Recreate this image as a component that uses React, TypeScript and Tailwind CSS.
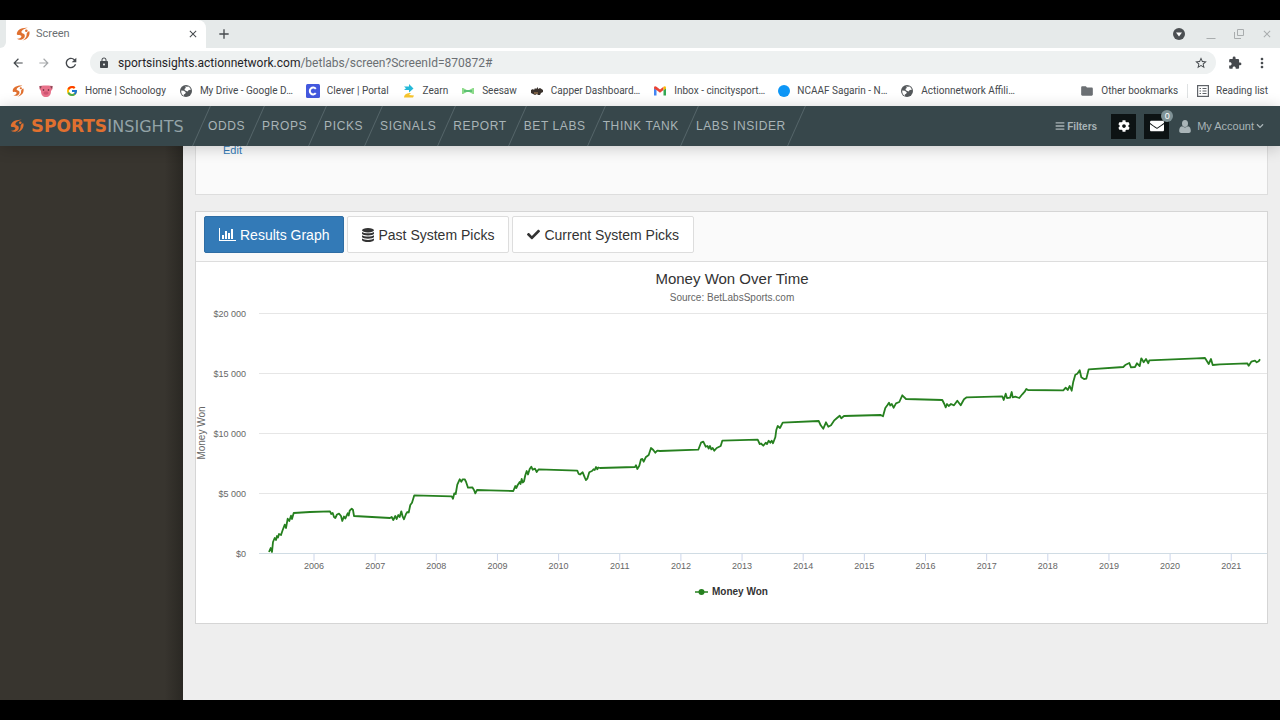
import type { ReactNode } from 'react';
import { FaCog, FaEnvelope, FaBars, FaCheck, FaChevronDown } from 'react-icons/fa';
import { FcGoogle } from 'react-icons/fc';
import {
  MdAdd,
  MdArrowBack,
  MdArrowForward,
  MdClose,
  MdExtension,
  MdFolder,
  MdLock,
  MdMoreVert,
  MdRefresh,
  MdStarBorder,
} from 'react-icons/md';

const navItems = ['ODDS', 'PROPS', 'PICKS', 'SIGNALS', 'REPORT', 'BET LABS', 'THINK TANK', 'LABS INSIDER'];

const years = [2006, 2007, 2008, 2009, 2010, 2011, 2012, 2013, 2014, 2015, 2016, 2017, 2018, 2019, 2020, 2021];

const moneyTicks = ['$0', '$5 000', '$10 000', '$15 000', '$20 000'];

// one line per season, followed by the flat off-season stretch
const moneyWon = [
  '269,552 270.7,548 272,552 273,542 274.7,538 276,540 277,536 278,537.5 279,534 281,535 282.7,530 284.7,524.7 286,528 287.7,518.7 289.3,521 291,515.7 292,519 293.7,513',
  '310,512 330,511.3 331.3,514 332.7,513 334,517 335.3,518 337,514.5 339,513.7 341,516 342.3,521 344,516.5 345.3,518.5 347.7,513.3 348.7,515.5 349.7,510.7 351.7,508.7 353,510 354,516',
  '390,518 391.7,517 393.3,520 395.3,516 396.7,519 398.3,515 399.7,517 401.3,511.3 402.7,516.7 404,519.3 406,514 407.3,512 408.7,512.5 410.3,505 412,502.7 414.3,495.3',
  '451.7,496.3 453,498.7 454.3,493.3 455.7,494 457.3,484.7 459.7,479.3 461.3,481.7 462.7,479.3 464.7,479.3 466,481.7 468,487.7 472.3,487.3 474,490 475.3,493.3 477,490',
  '490,490.3 513.3,491 515.3,486 516.3,488 517.7,485 519.7,482 520.5,484 521.7,479 522.7,482.5 524,481.3 525.3,475.3 526.7,471 528,474.5 529.7,469 531.3,466.7 532.7,469.7 535,468.7 536.7,472 538.7,469.3',
  '577.3,470.7 578.7,474 580,474.5 582.7,472.3 584.7,477.3 586,480 587.3,478.7 589.3,472.3 592,471 593.5,469.3 594.7,470 596,467 597.3,469.3 598.3,467.5 600,468',
  '635,467 636,465.3 637.3,469 639.3,465.7 641,459.3 642.3,459 643.7,461.7 645.7,457.3 648.7,455 651,448 653.3,450 655.3,452.7 657.3,450.7 660,451',
  '698.3,449.7 701,442.7 703.3,441.7 705.7,446.7 707.5,446 708.7,448.5 710,446 711.3,449.3 712.7,448 714.3,450.7 716.7,448 720.7,446 722.3,440.7',
  '757.7,439.7 759.7,444 761,443.5 763.3,445.7 765.7,442.7 767,444 768.7,440.7 770.3,442.7 771.7,440.7 773,443.3 775.3,437.3 776.3,430 777.7,426 780,428 782.7,422.7',
  '818.7,421 820.7,425.3 823.3,428.7 826,422.3 828.3,426.7 831,425.3 834,420.7 837,418 839.7,415.7 841.3,418.3 844,416',
  '880.7,415 883,416.3 885.3,408 887.3,405.3 889,402.7 890.3,405.5 891.7,404 893.7,407.7 896,403.3 899.3,402 902.3,395.3 906,399',
  '942.3,400 944.3,404 945.7,407.3 947,404 948.7,406 951,404 954,405.3 957.3,400.7 960.7,405.3 964,399.3 966.7,397.3',
  '1002.3,396.3 1003.7,400 1005.7,393.7 1007,398 1010,397.7 1011.7,392 1012.7,397.3 1015.3,396.7 1019.3,398 1022.3,394.3 1024.7,391.7 1026.3,389',
  '1028,390 1063.3,390.3 1065.7,387.7 1067.7,390 1069.7,386 1071.7,390.7 1073.3,381.7 1075.3,374.7 1077.3,373.7 1079.7,370.3 1081.3,377.3 1084,379 1086.3,378.7 1088.7,369.3',
  '1123.3,367 1125.7,364.7 1129.3,363 1131,367.3 1135,367 1137,363.3 1139.7,366 1141.3,358.3 1143.7,362.3 1146,359 1148.3,363.3 1149.3,360.3',
  '1196.7,358.3 1205,358 1208.7,364 1211,359 1212.7,365 1220,364.3 1247.3,363.3 1248.7,365.7 1251.3,361.7 1255,360.7 1256.7,362.3 1258.7,361.3 1260,359.3',
].join(' ');

function BallMark({ className }: { className: string }) {
  return (
    <svg viewBox="0 0 14 14" className={className} aria-hidden="true">
      <path d="M12 .8C6 0 .6 3 .8 7.200 1.800 8.800 5.200 7.600 5.400 9 5.500 10.800 3.500 12 .8 11.800 4.800 14 9 11.800 8.800 8.400 8.600 6 5.200 6.600 5.400 5 5.600 3.200 8.500 1.600 12 .8Z" fill="#e0702f" />
      <path d="M13.300 4.200C14.500 8.500 11.500 12.500 6.500 13.600 9.500 11.800 10.800 9.500 10.600 7 10.800 5.500 12 4.400 13.300 4.200Z" fill="#e0702f" />
      <circle cx="10.300" cy="3.800" r="1.300" fill="#e0702f" />
    </svg>
  );
}

function GlobeIcon() {
  return (
    <svg viewBox="0 0 14 14" className="size-3.5" aria-hidden="true">
      <circle cx="7" cy="7" r="6" fill="#54585b" />
      <path d="M2.200 6.500l2.600.3 2 1.400-.6 1.500-1.400.8v1.500C3 10.800 2 9 2.200 6.500ZM6 2.500l2 .2L9.500 2.600c1.300.9 2 2 2.300 3.200l-2 .3-1.300 1.400-1.700-.7L5.500 6l.3-1.500L7 4Z" fill="#fff" />
    </svg>
  );
}

function PigIcon() {
  return (
    <svg viewBox="0 0 14 14" className="size-3.5" aria-hidden="true">
      <path d="M.5 2l4-.5h5l4 .5v3L12 7c0 4-2 6-5 6S2 11 2 7L.5 5Z" fill="#e8718a" />
      <path d="M.5 2l2.500.5L1 5ZM13.500 2l-2.500.5 2 2.500Z" fill="#7d4652" />
      <ellipse cx="7" cy="9" rx="2.600" ry="1.800" fill="#cf5572" />
      <circle cx="4.500" cy="6" r=".8" fill="#4d2430" />
      <circle cx="9.500" cy="6" r=".8" fill="#4d2430" />
    </svg>
  );
}

function CleverIcon() {
  return (
    <svg viewBox="0 0 14 14" className="size-3.5" aria-hidden="true">
      <rect width="14" height="14" rx="1.500" fill="#4358de" />
      <path d="M9.800 4.800A3.400 3.400 0 1 0 9.800 9.200" fill="none" stroke="#fff" strokeWidth="2" />
    </svg>
  );
}

function ZearnIcon() {
  return (
    <svg viewBox="0 0 14 14" className="size-3.5" aria-hidden="true">
      <path d="M2 2.500h5V0l4.500 4.500L7 8.500V6H2l2-1.700Z" fill="#25b9d8" />
      <path d="M2 13.500c.5-3.500 3-4.500 7-4.500l-2 2 5 .5-1 2Z" fill="#f7c52d" />
    </svg>
  );
}

function SeesawIcon() {
  return (
    <svg viewBox="0 0 14 14" className="size-3.5" aria-hidden="true">
      <path d="M1 4c3 0 3 2 6 2s3-2 6-2v6c-3 0-3-2-6-2s-3 2-6 2Z" fill="#8edb8b" />
      <path d="M3 7h8" stroke="#4cb96c" strokeWidth="1.500" />
    </svg>
  );
}

function CapperIcon() {
  return (
    <svg viewBox="0 0 14 14" className="size-3.5" aria-hidden="true">
      <path d="M1 6l2-1 1 1 1-2 1 1 2-2v2l2-1 3 2v2l-2 1-1 2H8l-1-1-2 1-2-1-2-1Z" fill="#3a322d" />
      <path d="M4 9h4" stroke="#b98a5a" />
    </svg>
  );
}

function GmailIcon() {
  return (
    <svg viewBox="0 0 14 14" className="size-3.5" aria-hidden="true">
      <path d="M1 4v7.500h2.500V6Z" fill="#4285f4" />
      <path d="M13 4v7.500h-2.500V6Z" fill="#34a853" />
      <path d="M1 4c0-2 1.500-2 2.500-1.200L7 5.500l3.500-2.700V6L7 8.800 3.500 6v.2L1 4.500Z" fill="#ea4335" />
      <path d="M10.500 2.800C11.500 2 13 2 13 4v.5L10.500 6.200Z" fill="#fbbc04" />
    </svg>
  );
}

function DotIcon() {
  return <span className="block size-3 rounded-full bg-[#0d96f6]" />;
}

function ReadingListIcon() {
  return (
    <svg viewBox="0 0 12 12" className="size-3" fill="none" stroke="#5f6368" aria-hidden="true">
      <rect x=".6" y=".6" width="10.800" height="10.800" strokeWidth="1.200" />
      <path d="M2.500 3.500H4M2.500 6H4M2.500 8.500H4M5.500 3.500h4M5.500 6h4M5.500 8.500h4" />
    </svg>
  );
}

function UserIcon() {
  return (
    <svg viewBox="0 0 12 13" className="h-[13px] w-3" fill="currentColor" aria-hidden="true">
      <ellipse cx="6" cy="3.500" rx="3" ry="3.500" />
      <path d="M.2 11C.2 8.500 1 6.500 3 6.300c1.800 1.500 4.200 1.500 6 0 2 .2 2.800 2.200 2.800 4.700 0 1.200-.8 2-2 2H2.200c-1.200 0-2-.8-2-2Z" />
    </svg>
  );
}

function BarChartIcon() {
  return (
    <svg viewBox="0 0 17 13" className="h-[13px] w-[17px]" fill="currentColor" aria-hidden="true">
      <path d="M0 0h1v12h16v1H0ZM3 7h2v4H3ZM6 3h2v8H6ZM9 5h2v6H9ZM12 1h2v10h-2Z" />
    </svg>
  );
}

function DatabaseIcon() {
  return (
    <svg viewBox="0 0 12 14" className="h-3.5 w-3" fill="currentColor" aria-hidden="true">
      <ellipse cx="6" cy="2.200" rx="6" ry="2.200" />
      <path d="M0 4c2 1.700 10 1.700 12 0v1.800c-1 2.300-11 2.300-12 0Z" />
      <path d="M0 7.300c2 1.700 10 1.700 12 0v1.800c-1 2.300-11 2.300-12 0Z" />
      <path d="M0 10.600c2 1.700 10 1.700 12 0v1.300c-1 2.700-11 2.700-12 0Z" />
    </svg>
  );
}

function Bookmark({ icon, label }: { icon: ReactNode; label: string }) {
  return (
    <a href="#" className="flex items-center gap-[7px] whitespace-nowrap">
      {icon}
      <span>{label}</span>
    </a>
  );
}

function Browser() {
  return (
    <header className="bg-white font-[Roboto,sans-serif] text-[#45494d]">
      {/* Tab strip */}
      <div className="flex h-7 items-center bg-[#e6eaea]">
        <div className="h-7 w-2 bg-white">
          <div className="h-7 w-1.5 rounded-br-md bg-[#e6eaea]" />
        </div>
        <div className="flex h-7 w-[198px] items-center rounded-tr-lg bg-white pr-[7px] pl-2">
          <BallMark className="h-3.5 w-3.5" />
          <span className="ml-1.5 flex-1 text-[11px] text-[#6b6f73]">Screen</span>
          <button aria-label="Close tab">
            <MdClose className="size-3" />
          </button>
        </div>
        <button aria-label="New tab" className="ml-2.5">
          <MdAdd className="size-4" />
        </button>
        <div className="ml-auto flex items-center gap-4 pr-[7px]">
          <svg viewBox="0 0 12 12" className="size-3" aria-hidden="true">
            <circle cx="6" cy="6" r="6" fill="#4c5053" />
            <path d="M3 4.500h6L6 8.500Z" fill="#fff" />
          </svg>
          <button aria-label="Minimize" className="ml-1 text-[#a9adae]">
            <svg viewBox="0 0 12 12" className="size-3" stroke="currentColor" aria-hidden="true">
              <path d="M1.500 10.500h9" />
            </svg>
          </button>
          <button aria-label="Restore" className="text-[#a9adae]">
            <svg viewBox="0 0 12 12" className="size-3" fill="none" stroke="currentColor" aria-hidden="true">
              <path d="M4.500 1.500h6v6h-6ZM1.500 4v6.500H8" />
            </svg>
          </button>
          <button aria-label="Close" className="text-[#a9adae]">
            <MdClose className="size-3" />
          </button>
        </div>
      </div>

      {/* Toolbar */}
      <div className="flex h-[29px] items-center pr-2.5 pl-[11px]">
        <button aria-label="Back">
          <MdArrowBack className="size-3.5" />
        </button>
        <button aria-label="Forward" className="ml-3 text-[#a5a8aa]">
          <MdArrowForward className="size-3.5" />
        </button>
        <button aria-label="Reload" className="ml-3">
          <MdRefresh className="size-4" />
        </button>
        <div className="ml-[11px] flex h-[23px] flex-1 items-center rounded-full bg-[#eef1f1] px-2">
          <MdLock className="size-3" />
          <div className="ml-2 flex-1 text-xs text-[#6b6f73]">
            <span className="text-[#1f2326]">sportsinsights.actionnetwork.com</span>/betlabs/screen?ScreenId=870872#
          </div>
          <button aria-label="Bookmark this tab">
            <MdStarBorder className="size-3.5" />
          </button>
        </div>
        <button aria-label="Extensions" className="ml-3">
          <MdExtension className="size-3.5" />
        </button>
        <button aria-label="Menu" className="ml-3">
          <MdMoreVert className="size-4" />
        </button>
      </div>

      {/* Bookmarks bar */}
      <nav className="flex h-[29px] items-center gap-[13px] pr-3 pb-0.5 pl-3 text-[10px]">
        <a href="#" aria-label="Sports Insights" className="pr-0.5">
          <BallMark className="size-3" />
        </a>
        <a href="#" aria-label="Pig">
          <PigIcon />
        </a>
        <Bookmark icon={<FcGoogle className="size-3" />} label="Home | Schoology" />
        <Bookmark icon={<GlobeIcon />} label="My Drive - Google D…" />
        <Bookmark icon={<CleverIcon />} label="Clever | Portal" />
        <Bookmark icon={<ZearnIcon />} label="Zearn" />
        <Bookmark icon={<SeesawIcon />} label="Seesaw" />
        <Bookmark icon={<CapperIcon />} label="Capper Dashboard…" />
        <Bookmark icon={<GmailIcon />} label="Inbox - cincitysport…" />
        <Bookmark icon={<DotIcon />} label="NCAAF Sagarin - N…" />
        <Bookmark icon={<GlobeIcon />} label="Actionnetwork Affili…" />
        <div className="ml-auto flex items-center gap-[9px]">
          <Bookmark icon={<MdFolder className="size-3.5 text-[#6b6f73]" />} label="Other bookmarks" />
          <span className="h-3.5 w-px bg-[#dfe2e3]" />
          <Bookmark icon={<ReadingListIcon />} label="Reading list" />
        </div>
      </nav>
    </header>
  );
}

function SiteNav() {
  return (
    <div className="relative z-10 flex h-10 items-center bg-[#37474b] pr-4 pl-2.5 text-[#a9b4b7] shadow-[0_2px_16px_rgba(0,0,0,0.2)]">
      <a href="#" className="flex w-[191px] items-center gap-[7px] whitespace-nowrap">
        <BallMark className="size-3.5" />
        <span className="font-['DejaVu_Sans',sans-serif] text-base leading-5">
          <span className="text-[17px] leading-5 font-bold text-[#e0702f]">
            <span className="text-lg leading-5">S</span>PORTS
          </span>
          <span className="text-[#93a3a7]">
            <span className="text-lg leading-5">I</span>NSIGHTS
          </span>
        </span>
      </a>
      <span className="h-full w-px -skew-x-[24deg] bg-[#56666a]" />
      {navItems.map((item) => (
        <div key={item} className="flex h-full items-center">
          <a href="#" className="pr-2.5 pl-1.5 text-xs tracking-wider whitespace-nowrap">
            {item}
          </a>
          <span className="h-full w-px -skew-x-[24deg] bg-[#56666a]" />
        </div>
      ))}
      <div className="ml-auto flex items-center">
        <button className="flex items-center gap-0.5 text-[10px] font-bold">
          <FaBars className="size-2.5" />
          Filters
        </button>
        <button aria-label="Settings" className="ml-3.5 flex size-[25px] items-center justify-center bg-[#0d1314] text-white">
          <FaCog className="size-3" />
        </button>
        <button aria-label="Messages" className="relative ml-2 flex size-[25px] items-center justify-center bg-[#0d1314] text-white">
          <FaEnvelope className="size-3.5" />
          <span className="absolute -top-1 -right-1 flex size-3 items-center justify-center rounded-full bg-[#7f9296] text-[9px] leading-3">
            0
          </span>
        </button>
        <button className="ml-2.5 flex items-center text-[11px]">
          <UserIcon />
          <span className="ml-1.5">My Account</span>
          <FaChevronDown className="ml-0.5 size-2" />
        </button>
      </div>
    </div>
  );
}

function MoneyChart() {
  return (
    <svg viewBox="196 262 1071 361" className="block h-auto w-full" role="img" aria-label="Money Won Over Time">
      <text x="732" y="284" textAnchor="middle" fontSize="15" fill="#333">
        Money Won Over Time
      </text>
      <text x="732" y="301" textAnchor="middle" fontSize="10" fill="#666">
        Source: BetLabsSports.com
      </text>
      {moneyTicks.map((label, i) => (
        <g key={label}>
          <path d={`M259 ${553.5 - i * 60}H1268`} stroke={i === 0 ? '#d0dce4' : '#e6e6e6'} />
          <text x="246" y={557 - i * 60} textAnchor="end" fontSize="9" fill="#666">
            {label}
          </text>
        </g>
      ))}
      {years.map((year, i) => (
        <g key={year}>
          <path d={`M${314 + i * 61.15} 554v7`} stroke="#ccd6eb" />
          <text x={314 + i * 61.15} y="569" textAnchor="middle" fontSize="9" fill="#666">
            {year}
          </text>
        </g>
      ))}
      <text transform="translate(205 433) rotate(-90)" textAnchor="middle" fontSize="10" fill="#666">
        Money Won
      </text>
      <polyline points={moneyWon} fill="none" stroke="#26801f" strokeWidth="1.800" strokeLinejoin="round" />
      <path d="M695 592h13" stroke="#26801f" strokeWidth="1.500" />
      <circle cx="701.500" cy="592" r="3" fill="#26801f" />
      <text x="712" y="595" fontSize="10" fontWeight="bold" fill="#333">
        Money Won
      </text>
    </svg>
  );
}

export default function App() {
  return (
    <div className="flex min-h-screen flex-col bg-black py-5 font-['Liberation_Sans',Arial,sans-serif]">
      <Browser />
      <SiteNav />
      <div className="flex flex-1 overflow-hidden bg-[#eee]">
        <aside className="w-[183px] shrink-0 bg-linear-to-r from-[#38352f] from-90% to-[#2a2823]" />
        <main className="min-w-0 flex-1 px-3 pb-5">
          <section className="h-[49px] border border-t-0 border-[#ddd] bg-[#fafafa] px-[27px]">
            <a href="#" className="block text-[11px] leading-2 text-[#337ab7]">
              Edit
            </a>
          </section>

          <section className="mt-4 border border-[#d5d5d5] bg-white">
            <div className="flex gap-[3px] border-b border-[#ddd] bg-[#fafafa] px-2 pt-1 pb-2 text-sm text-[#333]">
              <button className="flex h-[37px] items-center gap-1 rounded-xs border border-[#2e6da4] bg-[#337ab7] px-3.5 text-white">
                <BarChartIcon />
                Results Graph
              </button>
              <button className="flex h-[37px] items-center gap-1 rounded-xs border border-[#ddd] bg-white px-3.5">
                <DatabaseIcon />
                Past System Picks
              </button>
              <button className="flex h-[37px] items-center gap-1 rounded-xs border border-[#ddd] bg-white px-3.5">
                <FaCheck className="size-[13px]" />
                Current System Picks
              </button>
            </div>
            <MoneyChart />
          </section>
        </main>
      </div>
    </div>
  );
}
